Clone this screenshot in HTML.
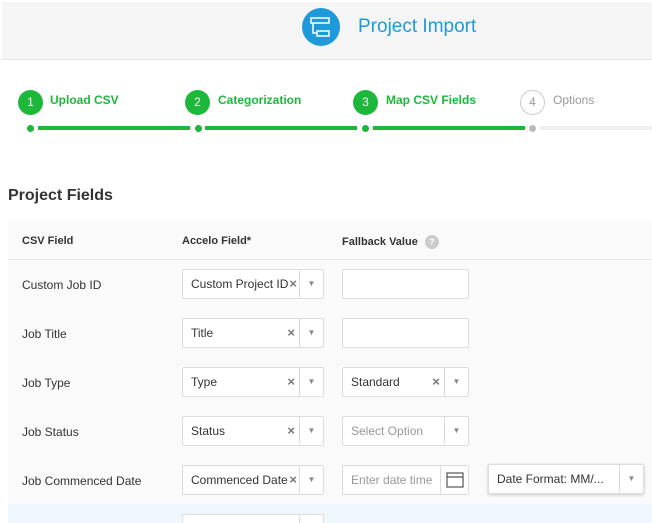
<!DOCTYPE html>
<html><head><style>
*{box-sizing:border-box;margin:0;padding:0}
html,body{width:652px;height:523px;overflow:hidden}
body{background:#fff;font-family:"Liberation Sans",sans-serif;color:#333;position:relative}
.hdr{position:absolute;left:2px;top:2px;width:650px;height:58px;background:#f5f5f5;border-bottom:1px solid #e6e6e6}
.logo{position:absolute;left:302px;top:8px;width:38px;height:38px;border-radius:50%;background:#1e9ad8}
.title{position:absolute;left:358px;top:16px;font-size:19px;color:#1e9ad8}
.sc{position:absolute;top:90px;width:25px;height:25px;border-radius:50%;background:#1db83a;color:#fff;font-size:12px;text-align:center;line-height:25px}
.sc.g{background:#fff;border:1px solid #ccc;color:#999;line-height:23px}
.sl{position:absolute;top:93px;font-size:12px;color:#1db83a;font-weight:bold}
.dot{position:absolute;top:125px;width:7px;height:7px;border-radius:50%;background:#1db83a}
.ln{position:absolute;top:126px;height:4px;background:#1db83a}
.pf{position:absolute;left:8px;top:187px;font-size:16px;font-weight:bold;color:#333}
.tb{position:absolute;left:8px;top:220px;width:644px;height:303px;background:#fafafa}
.th{position:absolute;top:235px;font-size:11px;font-weight:bold;color:#333}
.lbl{position:absolute;left:22px;font-size:12px;color:#333}
.box{position:absolute;height:30px;background:#fff;border:1px solid #ddd;border-radius:2px;font-size:12px;color:#333;padding-left:8px;line-height:28px;overflow:hidden;white-space:nowrap}
.box .x{position:absolute;right:28px;top:0;font-size:13px;font-weight:bold;color:#777}
.box .ar{position:absolute;right:0;top:0;width:24px;height:28px;border-left:1px solid #ddd;text-align:center;font-size:8px;color:#888}
.ph{color:#999}
</style></head><body>
<div class="hdr"></div>
<div class="logo"><svg width="38" height="38" viewBox="0 0 38 38" fill="none" stroke="#fff" stroke-width="1.5"><rect x="9" y="10" width="18" height="5"/><rect x="15" y="23" width="12" height="5"/><path d="M11 15v10h4"/></svg></div>
<div class="title">Project Import</div>

<div class="sc" style="left:18px">1</div><div class="sl" style="left:50px">Upload CSV</div>
<div class="sc" style="left:185px">2</div><div class="sl" style="left:218px">Categorization</div>
<div class="sc" style="left:353px">3</div><div class="sl" style="left:386px">Map CSV Fields</div>
<div class="sc g" style="left:520px">4</div><div class="sl" style="left:553px;color:#999;font-weight:normal">Options</div>
<div class="dot" style="left:27px"></div><div class="ln" style="left:38px;width:152px"></div>
<div class="dot" style="left:195px"></div><div class="ln" style="left:205px;width:152px"></div>
<div class="dot" style="left:362px"></div><div class="ln" style="left:373px;width:152px"></div>
<div class="dot" style="left:529px;background:#bbb"></div><div class="ln" style="left:540px;width:112px;background:#eee"></div>

<div class="pf">Project Fields</div>
<div class="tb"></div>
<div style="position:absolute;left:8px;top:259px;width:644px;height:1px;background:#e8e8e8"></div>
<div class="th" style="left:22px">CSV Field</div>
<div class="th" style="left:182px">Accelo Field*</div>
<div class="th" style="left:342px">Fallback Value <span style="display:inline-block;width:14px;height:14px;border-radius:50%;background:#ccc;color:#fff;font-size:9px;text-align:center;line-height:14px;margin-left:4px">?</span></div>

<div class="lbl" style="top:278px">Custom Job ID</div>
<div class="box" style="left:182px;top:269px;width:142px">Custom Project ID<span class="x" style="right:26px">×</span><span class="ar">▼</span></div>
<div class="box" style="left:342px;top:269px;width:127px"></div>

<div class="lbl" style="top:327px">Job Title</div>
<div class="box" style="left:182px;top:318px;width:142px">Title<span class="x">×</span><span class="ar">▼</span></div>
<div class="box" style="left:342px;top:318px;width:127px"></div>

<div class="lbl" style="top:376px">Job Type</div>
<div class="box" style="left:182px;top:367px;width:142px">Type<span class="x">×</span><span class="ar">▼</span></div>
<div class="box" style="left:342px;top:367px;width:127px">Standard<span class="x">×</span><span class="ar">▼</span></div>

<div class="lbl" style="top:425px">Job Status</div>
<div class="box" style="left:182px;top:416px;width:142px">Status<span class="x">×</span><span class="ar">▼</span></div>
<div class="box" style="left:342px;top:416px;width:127px"><span class="ph">Select Option</span><span class="ar">▼</span></div>

<div class="lbl" style="top:474px">Job Commenced Date</div>
<div class="box" style="left:182px;top:465px;width:142px">Commenced Date<span class="x" style="right:26px">×</span><span class="ar">▼</span></div>
<div class="box" style="left:342px;top:465px;width:127px"><span class="ph">Enter date time</span><span class="ar" style="width:28px"><svg width="20" height="18" viewBox="0 0 20 18" style="margin-top:5px" fill="none" stroke="#555" stroke-width="1.2"><rect x="2" y="2" width="16" height="14"/><path d="M2 6h16"/></svg></span></div>
<div class="box" style="left:488px;top:464px;width:156px;box-shadow:0 1px 3px rgba(0,0,0,.2)">Date Format: MM/...<span class="ar">▼</span></div>

<div style="position:absolute;left:8px;top:504px;width:644px;height:19px;background:#eef8fc"></div>
<div class="box" style="left:182px;top:514px;width:142px;height:9px;border-bottom:none"><span class="ar" style="height:9px"></span></div>
</body></html>
